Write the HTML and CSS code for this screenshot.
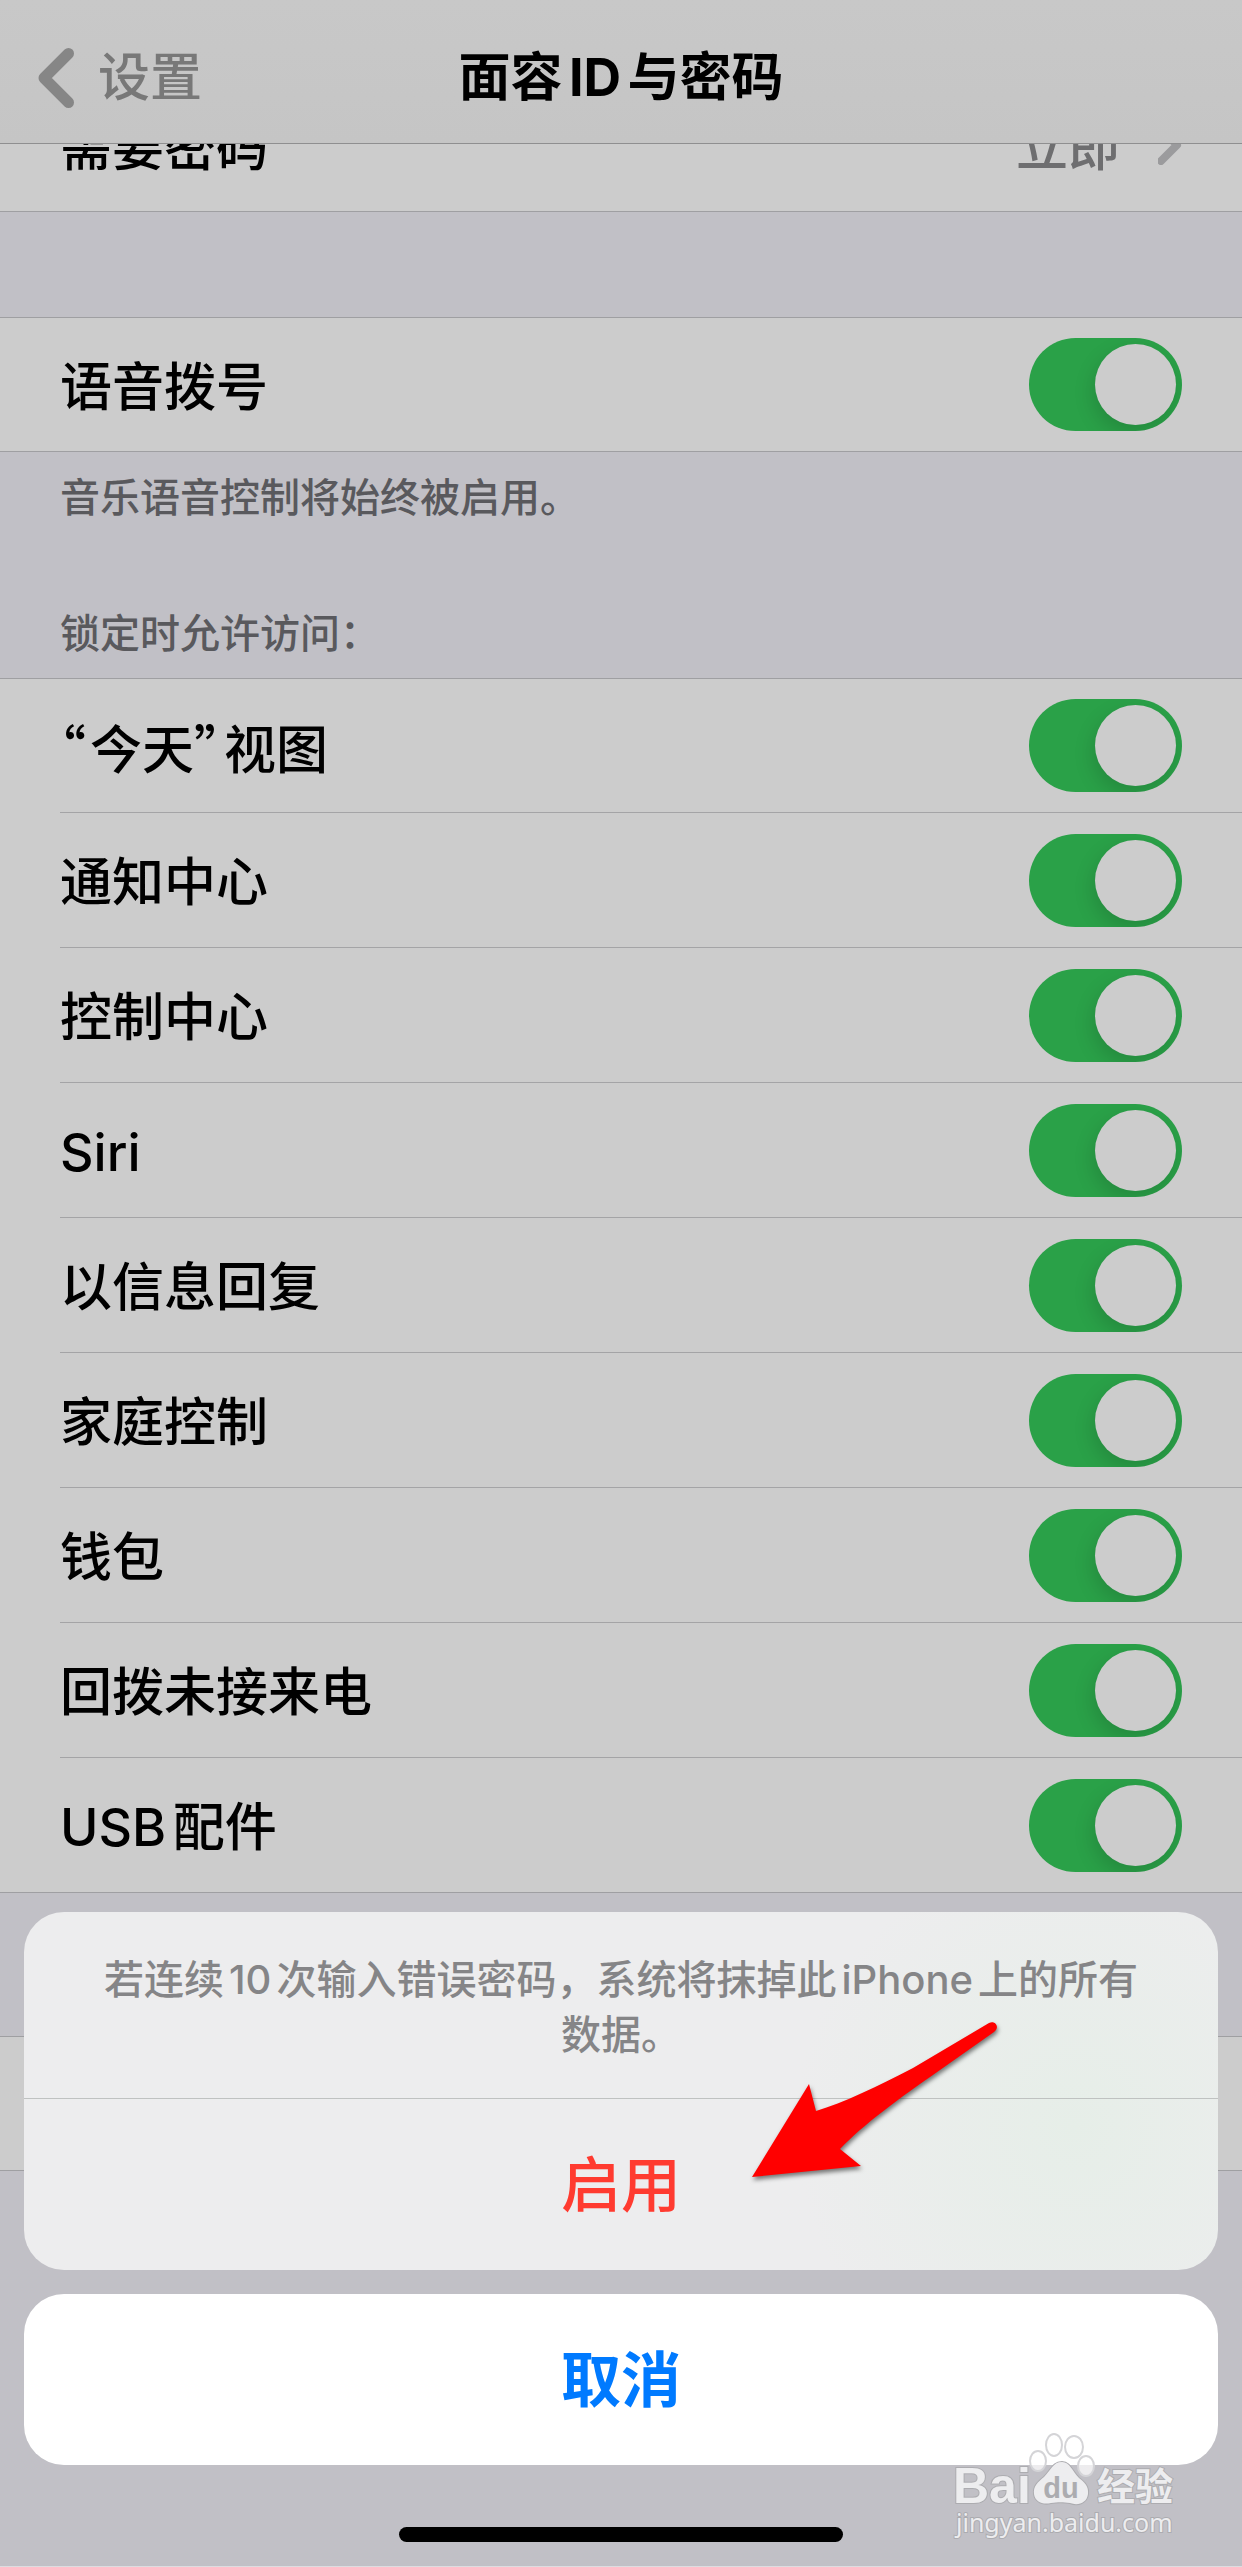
FILE: index.html
```html
<!DOCTYPE html>
<html lang="zh-CN">
<head>
<meta charset="utf-8">
<meta name="viewport" content="width=device-width, initial-scale=1">
<title>面容ID与密码</title>
<link rel="stylesheet" href="styles.css">
</head>
<body>
<div class="screen">
  <header class="navbar">
    <a class="back" href="#">
      <svg class="back-icon" viewBox="0 0 36 60" aria-hidden="true"><path d="M30.500 5.500L6 30l24.500 24.500"/></svg>
      <span>设置</span>
    </a>
    <h1 class="title">面容ID与密码</h1>
  </header>

  <main class="content">
    <section class="group group-first">
      <a class="row" href="#">
        <span>需要密码</span>
        <span class="value">立即</span>
        <svg class="chevron" viewBox="0 0 24 40" aria-hidden="true"><path d="M3 4l16 16L3 36"/></svg>
      </a>
    </section>

    <section class="group group-voice">
      <label class="row"><span>语音拨号</span><input class="switch" type="checkbox" role="switch" checked></label>
    </section>
    <p class="note">音乐语音控制将始终被启用。</p>

    <h2 class="note heading">锁定时允许访问：</h2>
    <section class="group">
      <label class="row"><span><span class="quote">“</span>今天<span class="quote">”</span>视图</span><input class="switch" type="checkbox" role="switch" checked></label>
      <label class="row"><span>通知中心</span><input class="switch" type="checkbox" role="switch" checked></label>
      <label class="row"><span>控制中心</span><input class="switch" type="checkbox" role="switch" checked></label>
      <label class="row"><span>Siri</span><input class="switch" type="checkbox" role="switch" checked></label>
      <label class="row"><span>以信息回复</span><input class="switch" type="checkbox" role="switch" checked></label>
      <label class="row"><span>家庭控制</span><input class="switch" type="checkbox" role="switch" checked></label>
      <label class="row"><span>钱包</span><input class="switch" type="checkbox" role="switch" checked></label>
      <label class="row"><span>回拨未接来电</span><input class="switch" type="checkbox" role="switch" checked></label>
      <label class="row"><span>USB配件</span><input class="switch" type="checkbox" role="switch" checked></label>
    </section>

    <section class="group group-erase"><div class="row"></div></section>
  </main>

  <div class="sheet" role="dialog" aria-labelledby="sheet-message">
    <div class="card">
      <p class="message" id="sheet-message">若连续10次输入错误密码，系统将抹掉此iPhone上的所有数据。</p>
      <button class="action enable" type="button">启用</button>
      <svg class="arrow" viewBox="0 0 256 172" aria-hidden="true">
        <path d="M4 159L61 66l7 27C95 85 130 68 165 50L241 5C248 2 252 10 246 14L192 52C150 81 115 107 92 131l21 17z"/>
      </svg>
    </div>
    <button class="action cancel" type="button">取消</button>
    <div class="home-indicator"></div>
  </div>

  <svg class="watermark" viewBox="0 0 228 120" role="img" aria-label="Baidu经验 jingyan.baidu.com">
    <g class="toes">
      <ellipse cx="86" cy="31" rx="8" ry="10"/>
      <ellipse cx="102" cy="15" rx="8" ry="11"/>
      <ellipse cx="122" cy="17" rx="9" ry="11"/>
      <ellipse cx="134" cy="36" rx="8" ry="10"/>
    </g>
    <g class="mark">
      <path d="M110 32c-9 0-11 8-18 15c-6 5-11 9-10 17c1 8 9 11 17 9c7-1 12-1 19 0c8 3 17 0 18-9c1-8-4-12-9-16c-7-7-9-16-17-16z"/>
      <text class="latin" x="1" y="73">Bai</text>
      <text class="han" x="145" y="70">经验</text>
      <text class="url" x="4" y="102">jingyan.baidu.com</text>
    </g>
    <text class="du" x="109" y="68" text-anchor="middle">du</text>
  </svg>
</div>
</body>
</html>
```
FILE: styles.css
```css
* {
  box-sizing: border-box;
}

body {
  margin: 0;
  background: #c1c0c6;
  color: #000;
  font-family: Inter, "Noto Sans CJK SC", sans-serif;
  font-size: 52px;
  font-weight: 500;
  line-height: 64px;
  text-autospace: normal;
}

a {
  color: inherit;
  text-decoration: none;
}

.screen {
  position: relative;
  min-height: 100vh;
  padding-bottom: 395px;
  overflow: hidden;
  border-bottom: 1px solid #dddde0;
}

/* navigation bar */
.navbar {
  position: sticky;
  top: 0;
  z-index: 1;
  display: grid;
  grid-template-columns: 1fr auto 1fr;
  align-items: center;
  height: 144px;
  padding: 12px 38px 0;
  background: linear-gradient(#c8c8c8, #c5c5c5);
  border-bottom: 1px solid #8f8f90;
}

.back {
  display: flex;
  align-items: center;
  gap: 24px;
  color: #787878;
}

.back-icon {
  width: 36px;
  height: 60px;
  fill: none;
  stroke: #868686;
  stroke-width: 11;
  stroke-linecap: round;
  stroke-linejoin: round;
}

.title {
  margin: 0;
  font-size: 52px;
  font-weight: 700;
}

/* settings list */
.content {
  margin-top: -67px;
}

.group {
  background: #ccc;
  border: solid #9f9fa2;
  border-width: 1px 0;
}

.group-voice {
  margin-top: 105px;
}

.group-erase {
  margin-top: 143px;
}

.row {
  display: flex;
  align-items: center;
  justify-content: space-between;
  height: 133px;
  margin-left: 60px;
  padding-right: 60px;
}

.row + .row {
  height: 135px;
  border-top: 1px solid #a4a4a6;
}

.row > span {
  padding-top: 6px;
}

.quote {
  padding-right: 4px;
  font-family: "Noto Sans CJK SC", sans-serif;
  font-feature-settings: "halt";
}

.value {
  margin-left: auto;
  color: #6e6e70;
}

.chevron {
  width: 24px;
  height: 40px;
  margin-left: 38px;
  fill: none;
  stroke: #9b9b9d;
  stroke-width: 8;
  stroke-linecap: round;
  stroke-linejoin: round;
}

.switch {
  appearance: none;
  display: flex;
  justify-content: flex-end;
  width: 153px;
  height: 93px;
  margin: 0;
  padding: 6px;
  overflow: hidden;
  border-radius: 47px;
  background: #aaa;
}

.switch:checked {
  background: #2aa148;
}

.switch::before {
  content: "";
  width: 81px;
  height: 81px;
  border-radius: 50%;
  background: #ccc;
  box-shadow: -2px 8px 20px rgba(0, 0, 0, 0.15);
}

.note {
  margin: 0;
  padding: 22px 60px 0;
  color: #59595d;
  font-size: 40px;
  font-weight: 500;
  line-height: 48px;
}

.heading {
  padding: 88px 60px 20px;
}

/* action sheet */
.sheet {
  position: absolute;
  right: 0;
  bottom: 0;
  left: 0;
  z-index: 2;
  display: flex;
  flex-direction: column;
  gap: 24px;
  padding: 0 24px 24px;
}

.card {
  position: relative;
  border-radius: 40px;
  background:
    radial-gradient(circle at 88% 60%, #e6eee8, rgba(230, 238, 232, 0) 280px),
    #ededee;
}

.message {
  margin: 0;
  padding: 40px 68px 36px;
  color: #858587;
  font-size: 40px;
  line-height: 55px;
  text-align: center;
}

.action {
  display: block;
  width: 100%;
  height: 171px;
  padding: 0;
  border: 0;
  background: none;
  font: inherit;
  font-size: 60px;
}

.enable {
  height: 172px;
  border-top: 1px solid #bfc2c1;
  color: #ff3b30;
}

.cancel {
  border-radius: 40px;
  background: #fff;
  color: #007aff;
  font-weight: 700;
}

.arrow {
  position: absolute;
  top: 106px;
  left: calc(50% + 127px);
  width: 256px;
  height: 172px;
  fill: #f00;
  filter: drop-shadow(1px 3px 2px rgba(0, 0, 0, 0.5));
}

.home-indicator {
  align-self: center;
  width: 444px;
  height: 15px;
  margin-top: 38px;
  border-radius: 8px;
  background: #000;
}

/* site mark in the lower right corner */
.watermark {
  position: absolute;
  right: 62px;
  bottom: 16px;
  z-index: 3;
  width: 228px;
  height: 120px;
}

.mark {
  fill: #ededef;
  stroke: #acacb0;
  stroke-width: 2;
  paint-order: stroke;
}

.toes {
  fill: rgba(255, 255, 255, 0.7);
  stroke: #d4d4d7;
  stroke-width: 2;
}

.latin {
  font: 700 50px "Liberation Sans", sans-serif;
}

.han {
  font: 700 38px "Noto Sans CJK SC", sans-serif;
}

.url {
  font: 400 25px "Noto Sans", sans-serif;
}

.du {
  fill: #acacb0;
  font: 700 29px "Liberation Sans", sans-serif;
}
```
